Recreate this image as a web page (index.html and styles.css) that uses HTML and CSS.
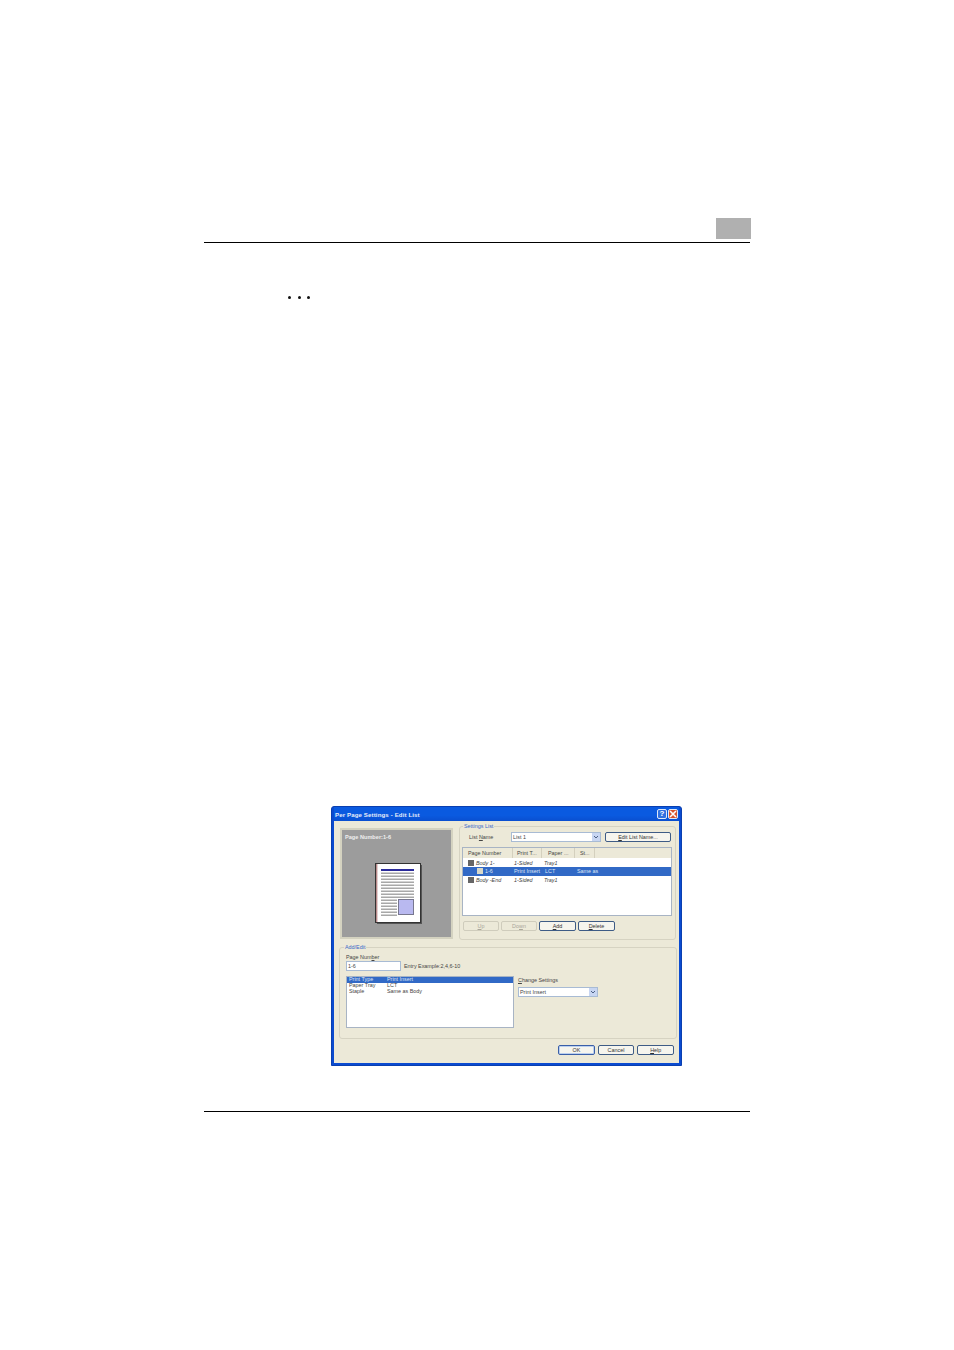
FILE: index.html
```html
<!DOCTYPE html>
<html lang="en">
<head>
<meta charset="utf-8">
<title>Per Page Settings - Edit List</title>
<link rel="stylesheet" href="styles.css">
</head>
<body>
<div class="page">
  <header class="page-head"><div class="tab"></div></header>
  <div class="dots"><span></span><span></span><span></span></div>
  <section class="dialog">
    <div class="titlebar">
      <span class="title">Per Page Settings - Edit List</span>
      <span class="winbtn help-btn">?</span>
      <span class="winbtn close-btn">
        <svg viewBox="0 0 10 10" width="10" height="10"><path d="M2 2L8 8M8 2L2 8" stroke="#fff" stroke-width="1.6"/></svg>
      </span>
    </div>
    <div class="dialog-body">
      <div class="top-row">
        <div class="preview">
          <div class="preview-label">Page Number:1-6</div>
          <svg class="thumb" viewBox="0 0 47 61" width="47" height="61">
            <rect x="2" y="2" width="45" height="59" fill="#555"/>
            <rect x="0.5" y="0.5" width="45" height="59" fill="#fff" stroke="#333"/>
            <rect x="1" y="1" width="1.4" height="58" fill="#b98a8a"/>
            <rect x="6" y="6" width="33" height="2" fill="#2a2a9a"/>
            <g fill="#a8a8a8">
              <rect x="6" y="9.5" width="33" height="1.5"/><rect x="6" y="12.5" width="33" height="1.5"/>
              <rect x="6" y="15.5" width="33" height="1.5"/><rect x="6" y="18.5" width="33" height="1.5"/>
              <rect x="6" y="21.5" width="33" height="1.5"/><rect x="6" y="24.5" width="33" height="1.5"/>
              <rect x="6" y="27.5" width="33" height="1.5"/><rect x="6" y="30.5" width="33" height="1.5"/>
              <rect x="6" y="33.5" width="33" height="1.5"/>
              <rect x="6" y="36.5" width="16" height="1.5"/><rect x="6" y="39.5" width="16" height="1.5"/>
              <rect x="6" y="42.5" width="16" height="1.5"/><rect x="6" y="45.5" width="16" height="1.5"/>
              <rect x="6" y="48.5" width="16" height="1.5"/><rect x="6" y="51.5" width="16" height="1.5"/>
            </g>
            <rect x="23.5" y="36.5" width="15" height="15" fill="#b9b9f0" stroke="#77778f"/>
          </svg>
        </div>
        <div class="group settings-group">
          <div class="legend">Settings List</div>
          <div class="name-row">
            <span class="name-label">List <u>N</u>ame</span>
            <div class="select name-select"><span class="select-text">List 1</span><span class="arrow"><svg viewBox="0 0 6 4" width="6" height="4"><path d="M1 1L3 3L5 1" fill="none" stroke="#4d6185" stroke-width="1"/></svg></span></div>
            <button class="btn edit-btn"><u>E</u>dit List Name...</button>
          </div>
          <div class="listview">
            <div class="lv-head">
              <span class="col-1 head-1">Page Number</span>
              <span class="col-2 head-2">Print T...</span>
              <span class="col-3 head-3">Paper ...</span>
              <span class="col-4 head-4">St...</span>
            </div>
            <div class="lv-row it first"><span class="col-1"><i class="ic"></i>Body 1-</span><span class="col-2">1-Sided</span><span class="col-3">Tray1</span><span class="col-4"></span></div>
            <div class="lv-row sel"><span class="col-1 sub"><i class="ic ic-light"></i>1-6</span><span class="col-2">Print Insert</span><span class="col-3">LCT</span><span class="col-4">Same as</span></div>
            <div class="lv-row it"><span class="col-1"><i class="ic"></i>Body -End</span><span class="col-2">1-Sided</span><span class="col-3">Tray1</span><span class="col-4"></span></div>
          </div>
          <div class="list-actions">
            <button class="btn off"><u>U</u>p</button>
            <button class="btn off">Do<u>w</u>n</button>
            <button class="btn"><u>A</u>dd</button>
            <button class="btn"><u>D</u>elete</button>
          </div>
        </div>
      </div>
      <div class="group edit-group">
        <div class="legend">Add/Edit</div>
        <div class="field-label">Page Num<u>b</u>er</div>
        <div class="entry-row">
          <div class="input">1-6</div>
          <span>Entry Example:2,4,6-10</span>
        </div>
        <div class="edit-row">
          <div class="props">
            <div class="prop sel"><span>Print Type</span><span>Print Insert</span></div>
            <div class="prop"><span>Paper Tray</span><span>LCT</span></div>
            <div class="prop"><span>Staple</span><span>Same as Body</span></div>
          </div>
          <div class="change">
            <div class="change-label"><u>C</u>hange Settings</div>
            <div class="select change-select"><span class="select-text">Print Insert</span><span class="arrow"><svg viewBox="0 0 6 4" width="6" height="4"><path d="M1 1L3 3L5 1" fill="none" stroke="#4d6185" stroke-width="1"/></svg></span></div>
          </div>
        </div>
      </div>
      <div class="dialog-actions">
        <button class="btn default">OK</button>
        <button class="btn">Cancel</button>
        <button class="btn"><u>H</u>elp</button>
      </div>
    </div>
  </section>
  <footer class="page-foot"></footer>
</div>
</body>
</html>
```
FILE: styles.css
```css
* { box-sizing: border-box; }
html, body { margin: 0; background: #fff; }
body { font-family: "Liberation Sans", Arial, sans-serif; font-size: 5.4px; color: #444; }
u { text-decoration: underline; }
.page { width: 954px; height: 1350px; padding-top: 218px; overflow: hidden; }
.page-head { margin-left: 204px; width: 546px; height: 25px; border-bottom: 1px solid #000; display: flex; justify-content: flex-end; }
.tab { width: 35px; height: 21px; background: #b0b0b0; margin-right: -1px; }
.dots { margin: 53px 0 0 288px; display: flex; gap: 6.5px; height: 3px; }
.dots span { width: 3px; height: 3px; border-radius: 50%; background: #111; }
.dialog { margin: 507px 0 0 331px; width: 351px; height: 260px; background: #0b4bd0; border: 1px solid #0a3fb0; border-radius: 3px 3px 0 0; padding: 0 2px 2px; display: flex; flex-direction: column; }
.titlebar { height: 14px; flex: none; display: flex; align-items: center; gap: 1px; padding: 0 0 0 1px; background: linear-gradient(#0a5ae0, #0a5ae0 60%, #0a4fd0); }
.title { flex: 1; color: #e8edf8; font-weight: bold; font-size: 6.1px; letter-spacing: 0.12px; }
.winbtn { width: 10px; height: 10px; border: 1px solid #dfe8f8; border-radius: 2px; display: flex; align-items: center; justify-content: center; color: #fff; font-weight: bold; font-size: 8px; line-height: 1; }
.help-btn { background: #2f6fe0; }
.close-btn { background: #d8552f; margin-right: 1px; }
.close-btn svg { flex: none; margin: -1px; }
.dialog-body { flex: 1; background: #ece9d8; padding: 5px 5px 0 5px; display: flex; flex-direction: column; }
.top-row { display: flex; align-items: flex-start; height: 116px; }
.preview { margin: 2px 6px 0 1px; width: 113px; height: 111px; flex: none; background: #9c9c9c; border: 2px solid #d4d2c0; padding: 4px 3px 0; color: #eee; font-weight: bold; }
.preview-label { height: 29px; line-height: 6px; font-size: 5.6px; }
.thumb { display: block; margin-left: 30px; }
.group { border: 1px solid #d6d3c2; border-radius: 3px; }
.legend { width: fit-content; margin-top: -4px; height: 7px; line-height: 7px; background: #ece9d8; color: #3a67c8; padding: 0 1px; }
.settings-group { width: 217px; height: 114px; padding: 0 4px 0 2px; }
.settings-group .legend { margin-left: 1px; }
.name-row { display: flex; align-items: center; margin-top: 2px; height: 10px; }
.name-label { width: 49px; padding-left: 7px; flex: none; }
.select { display: flex; align-items: center; background: #fff; border: 1px solid #a8bbd4; height: 10px; }
.select-text { flex: 1; padding-left: 1px; }
.arrow { width: 8px; height: 8px; background: #c8d6f2; display: flex; align-items: center; justify-content: center; }
.name-select { width: 90px; margin-right: 4px; }
.btn { font: inherit; color: #333; background: #f6f5ee; border: 1px solid #3e5c86; border-radius: 2px; padding: 0; width: 37px; height: 10px; line-height: 8px; text-align: center; display: block; }
.edit-btn { width: 66px; }
.listview { margin-top: 5px; width: 210px; height: 69px; background: #fff; border: 1px solid #a8b4c4; }
.lv-head, .lv-row { display: grid; grid-template-columns: 50px 29px 33px 20px; }
.lv-head { height: 10px; background: #ece9d8; line-height: 10px; }
.lv-head span { border-right: 1px solid #d4d0be; }
.head-1 { padding-left: 5px; }
.head-2 { padding-left: 4px; }
.head-3 { padding-left: 6px; }
.head-4 { padding-left: 5px; }
.lv-row { height: 8.5px; line-height: 8.5px; white-space: nowrap; }
.lv-row.first { margin-top: 0.5px; }
.lv-row .col-1 { display: flex; align-items: center; gap: 2px; padding-left: 5px; }
.lv-row .sub { padding-left: 14px; }
.lv-row .col-2 { padding-left: 1px; }
.lv-row .col-3 { padding-left: 2px; }
.lv-row .col-4 { padding-left: 2px; }
.it { font-style: italic; }
.lv-row.sel { background: #3169c6; color: #dfe6f4; grid-template-columns: 50px 30px 32px 20px 1fr; }
.ic { width: 6px; height: 6px; background: #666; flex: none; display: block; }
.ic-light { background: #d8d8c8; }
.list-actions { display: flex; gap: 2px; margin-top: 5px; padding-left: 1px; }
.list-actions .btn { width: 36px; height: 10px; }
.list-actions .btn:nth-child(n+3) { width: 37px; }
.list-actions .btn.off { color: #aaa69a; border-color: #cfccbc; background: #ece9d8; }
.edit-group { margin: 5px 0 0 0; width: 338px; height: 92px; padding: 0 0 0 6px; }
.edit-group .legend { margin-left: -2px; }
.field-label { margin-top: 3px; height: 7px; line-height: 7px; }
.entry-row { display: flex; align-items: center; gap: 3px; margin-top: 0; }
.input { width: 55px; height: 10px; line-height: 8px; background: #fff; border: 1px solid #a8bbd4; padding-left: 1px; }
.edit-row { display: flex; margin-top: 5px; }
.props { width: 168px; height: 52px; background: #fff; border: 1px solid #a8b4c4; flex: none; }
.prop { display: grid; grid-template-columns: 38px 1fr; height: 5.6px; line-height: 5.6px; padding-left: 2px; }
.prop.sel { background: #3169c6; color: #dfe6f4; height: 6px; }
.change { margin: 0 0 0 4px; }
.change-label { height: 7px; line-height: 7px; margin-top: 1px; }
.change-select { width: 80px; margin-top: 3px; }
.dialog-actions { display: flex; gap: 3px; margin-top: 6px; padding-left: 219px; }
.dialog-actions .btn.default { border-color: #3a5fa8; box-shadow: inset 0 0 0 1px #bcd0ee; }
.page-foot { margin: 45px 0 0 204px; width: 546px; height: 1px; background: #000; }
```
